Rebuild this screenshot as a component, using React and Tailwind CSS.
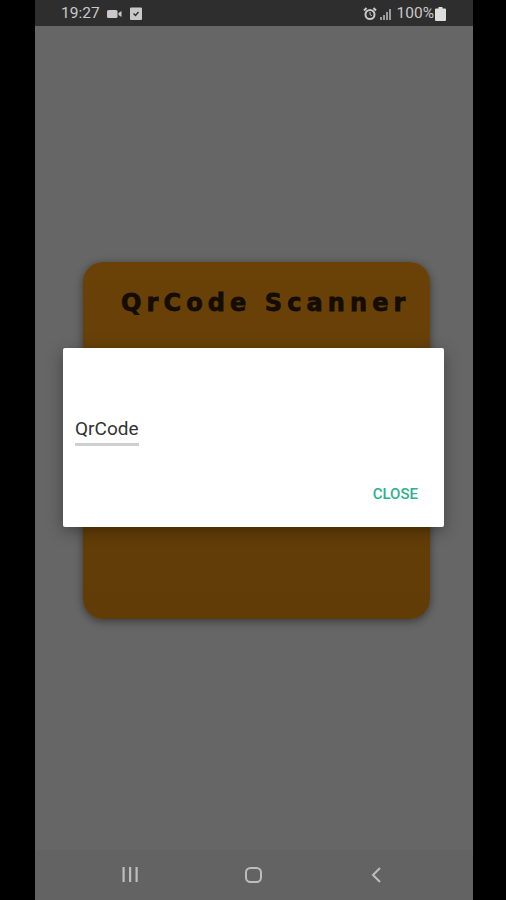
import { useState } from 'react';

export default function App() {
  const [value] = useState('QrCode');

  return (
    <div className="flex h-[900px] w-[506px] overflow-hidden bg-black font-['Roboto',sans-serif]">
      <div className="ml-[35px] flex h-full w-[438px] flex-col bg-[#666666]">
        <div className="flex h-[26px] items-center justify-between bg-[#2e2e2e] pt-[1px] pl-[26px] pr-[27px] text-[#c9c9c9]">
          <div className="flex items-center gap-[7px]">
            <span className="text-[15.500px]">19:27</span>
            <svg width="15" height="10" viewBox="0 0 15 10" fill="currentColor">
              <rect x="0" y="1" width="10.500" height="8" rx="1.500" />
              <path d="M11.500 4l3-2v6l-3-2z" />
            </svg>
            <svg width="12" height="13" viewBox="0 0 12 13" className="ml-[1px]">
              <path d="M1 0.500h10a1 1 0 0 1 1 1V12a1 1 0 0 1-1 1H1a1 1 0 0 1-1-1V1.500a1 1 0 0 1 1-1z" fill="currentColor" />
              <path d="M3.500 6.500l2 2 3-3.500" stroke="#2e2e2e" strokeWidth="1.400" fill="none" />
            </svg>
          </div>
          <div className="flex items-center">
            <svg width="14" height="14" viewBox="0 0 14 14" fill="none" stroke="currentColor">
              <circle cx="7" cy="7.500" r="4.500" strokeWidth="2" />
              <path d="M7 5v2.700l1.800 1" strokeWidth="1" />
              <path d="M1 3.500L3.500 1M13 3.500L10.500 1" strokeWidth="2" />
            </svg>
            <svg width="12" height="12" viewBox="0 0 12 12" fill="currentColor" className="ml-[3px] opacity-70">
              <rect x="0" y="9" width="2" height="3" />
              <rect x="3" y="7" width="2" height="5" />
              <rect x="6" y="4" width="2" height="8" />
              <rect x="9" y="1" width="2" height="11" />
            </svg>
            <span className="ml-[5px] text-[15.500px]">100%</span>
            <svg width="11" height="14" viewBox="0 0 11 14" fill="#dddddd" className="ml-[1px]">
              <path d="M3.500 0h4v1.500h2.500a1 1 0 0 1 1 1V13a1 1 0 0 1-1 1H1a1 1 0 0 1-1-1V2.500a1 1 0 0 1 1-1h2.500z" />
            </svg>
          </div>
        </div>

        <div className="relative flex-1 pl-[48px] pt-[236px]">
          <div className="h-[357px] w-[347px] rounded-[20px] bg-gradient-to-b from-[#6a4208] to-[#613c07] pl-[38px] pt-[26px] shadow-[0_2px_8px_rgba(0,0,0,0.45)]">
            <h1 className="font-['DejaVu_Sans',sans-serif] text-[24px] leading-[30px] font-bold tracking-[5.100px] whitespace-nowrap text-[#150d03] [-webkit-text-stroke:0.8px_#150d03]">
              QrCode Scanner
            </h1>
          </div>

          <div className="absolute top-[322px] left-[28px] flex h-[179px] w-[381px] flex-col rounded-[2px] bg-white shadow-[0_4px_16px_rgba(0,0,0,0.35)]">
            <div className="mt-[68px] ml-[12px] w-fit border-b-[3px] border-[#cfcfcf] pb-[2px] text-[19px] leading-[25px] text-[#333333]">
              {value}
            </div>
            <button className="mt-[37px] mr-[26px] self-end text-[15px] leading-[22px] font-medium text-[#2fb08f]">
              CLOSE
            </button>
          </div>
        </div>

        <div className="flex h-[50px] items-center justify-between bg-[#636363] pb-[1px] pl-[87px] pr-[88px] text-[#bdbdbd]">
          <svg width="17" height="15" viewBox="0 0 17 15" fill="currentColor">
            <rect x="0.500" y="0" width="2.200" height="15" />
            <rect x="7" y="0" width="2.200" height="15" />
            <rect x="13.500" y="0" width="2.200" height="15" />
          </svg>
          <svg width="17" height="16" viewBox="0 0 17 16" fill="none" stroke="currentColor" strokeWidth="2">
            <rect x="1" y="1" width="15" height="14" rx="4.500" />
          </svg>
          <svg width="17" height="16" viewBox="0 0 17 16" fill="none" stroke="currentColor" strokeWidth="2">
            <path d="M12 1L5 8l7 7" />
          </svg>
        </div>
      </div>
    </div>
  );
}
